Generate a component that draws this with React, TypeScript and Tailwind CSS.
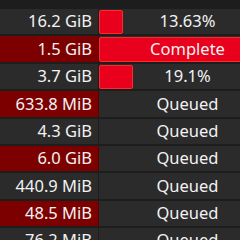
import React from 'react';

type Row = { size: string; status: string; pct?: number; flagged?: boolean };

const rows: Row[] = [
  { size: '16.2 GiB', status: '13.63%', pct: 13.63 },
  { size: '1.5 GiB', status: 'Complete', pct: 100, flagged: true },
  { size: '3.7 GiB', status: '19.1%', pct: 19.1 },
  { size: '633.8 MiB', status: 'Queued', flagged: true },
  { size: '4.3 GiB', status: 'Queued' },
  { size: '6.0 GiB', status: 'Queued', flagged: true },
  { size: '440.9 MiB', status: 'Queued' },
  { size: '48.5 MiB', status: 'Queued', flagged: true },
  { size: '76.2 MiB', status: 'Queued' },
];

export default function App() {
  return (
    <div
      className="h-[240px] w-[240px] overflow-hidden bg-[#1d1d1d] pt-[9px] text-[16.5px] text-[#f2f2f2]"
      style={{ fontFamily: '"Noto Sans", "Open Sans", sans-serif' }}
    >
      <div className="flex w-[276px] flex-col">
        {rows.map((r) => (
          <div key={r.size} className="flex h-[27.375px] border-b-2 border-[#1d1d1d]">
            <div
              className={`flex w-[98px] shrink-0 items-center justify-end pr-[6px] leading-none ${
                r.flagged ? 'bg-[#7c0000]' : 'bg-[#2b2b2b]'
              }`}
            >
              {r.size}
            </div>
            <div className={`w-px shrink-0 ${r.flagged ? 'bg-[#5a0000]' : 'bg-[#1d1d1d]'}`} />
            <div className="relative flex flex-1 items-center justify-center bg-[#2b2b2b] leading-none">
              {r.pct !== undefined && (
                <div
                  className="absolute top-[1px] bottom-0 left-0 rounded-[2px] border border-[#ff2b2b] bg-[#e8001c]"
                  style={{ width: `${r.pct}%` }}
                />
              )}
              <span className="relative">{r.status}</span>
            </div>
          </div>
        ))}
      </div>
    </div>
  );
}
